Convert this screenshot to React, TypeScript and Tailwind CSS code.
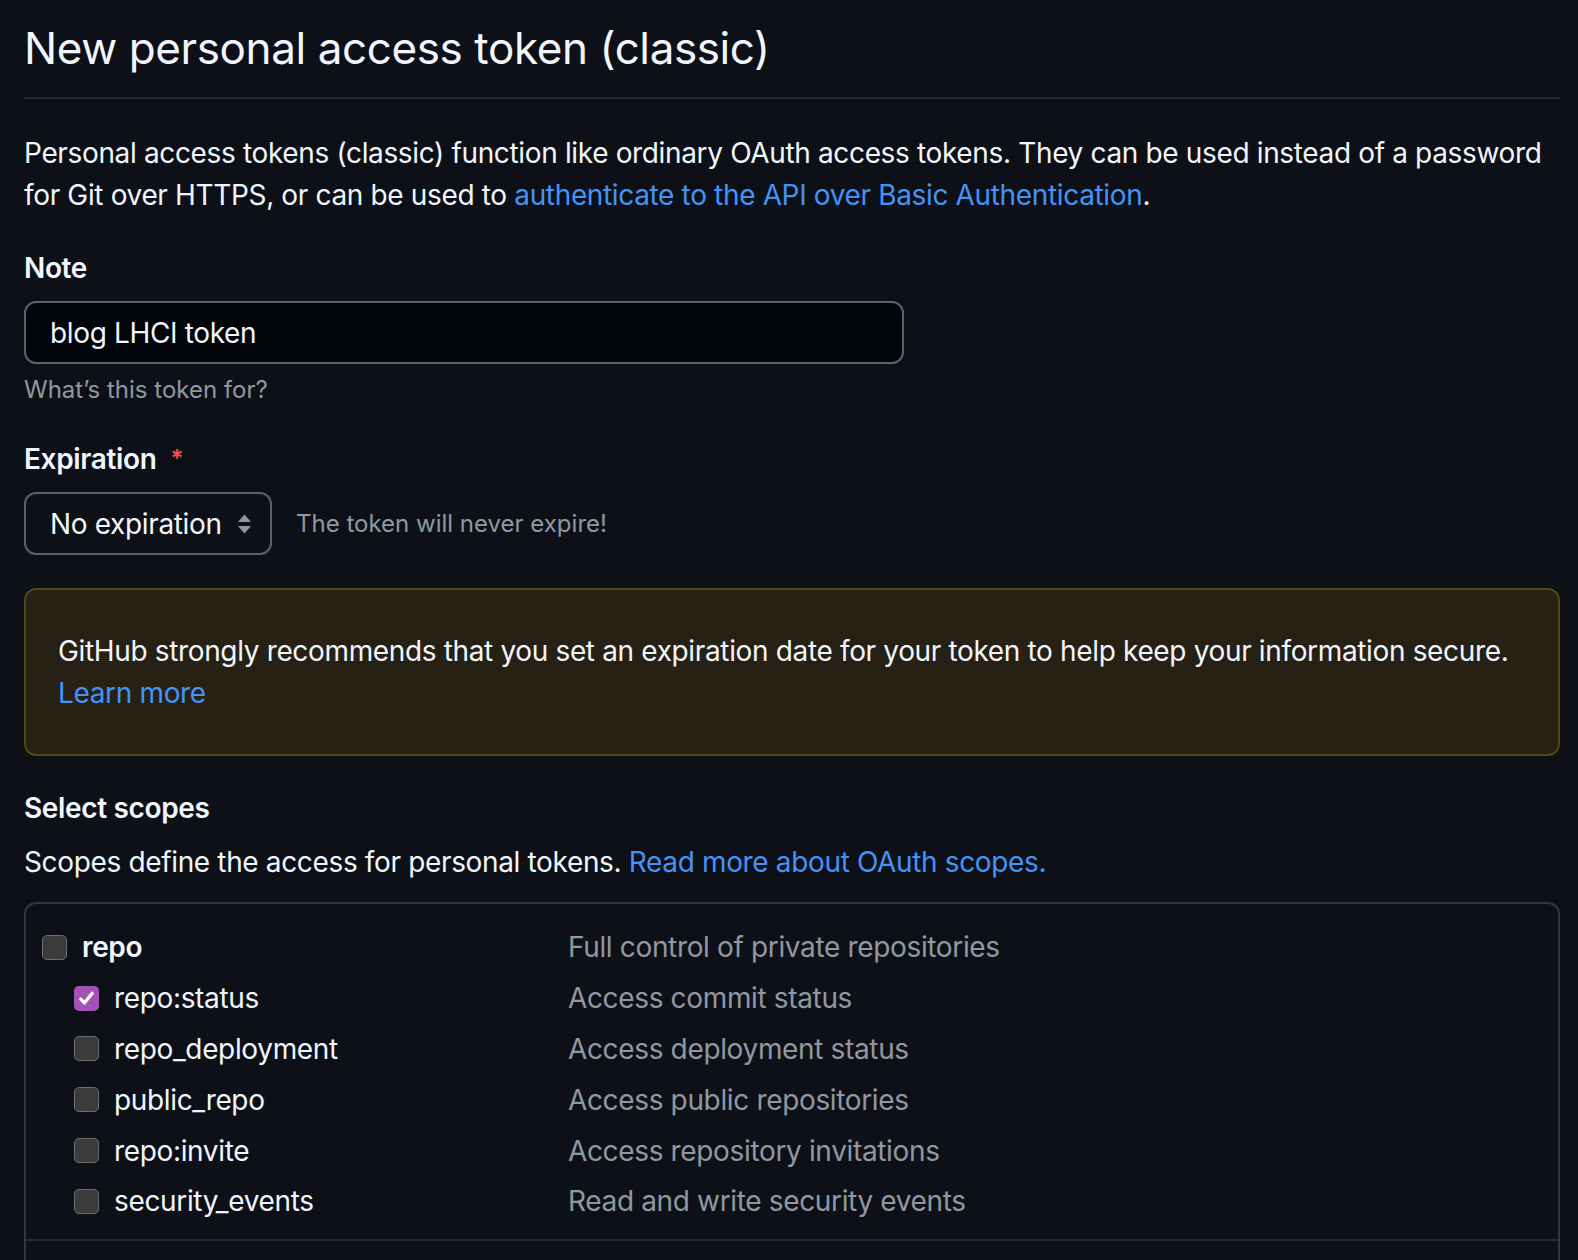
import React from 'react';

type Scope = {
  name: string;
  description: string;
  checked?: boolean;
  parent?: boolean;
};

const scopes: Scope[] = [
  { name: 'repo', description: 'Full control of private repositories', parent: true },
  { name: 'repo:status', description: 'Access commit status', checked: true },
  { name: 'repo_deployment', description: 'Access deployment status' },
  { name: 'public_repo', description: 'Access public repositories' },
  { name: 'repo:invite', description: 'Access repository invitations' },
  { name: 'security_events', description: 'Read and write security events' },
];

const Checkbox: React.FC<{ checked?: boolean }> = ({ checked }) =>
  checked ? (
    <span className="flex h-[25px] w-[25px] shrink-0 items-center justify-center rounded-[5px] bg-[#a451b8]">
      <svg width="19" height="19" viewBox="0 0 16 16" fill="none">
        <path d="M3.2 8.4l3 3.4L12.8 3.6" stroke="#ffffff" strokeWidth="2.8" strokeLinecap="round" strokeLinejoin="round" />
      </svg>
    </span>
  ) : (
    <span className="block h-[25px] w-[25px] shrink-0 rounded-[5px] border-[1.5px] border-[#6e6e6e] bg-[#3b3b3b]" />
  );

const SelectArrows = () => (
  <svg width="15" height="22" viewBox="0 0 15 22" className="shrink-0">
    <path d="M7.5 1.5l6.5 7.5H1z" fill="#9198a1" />
    <path d="M7.5 20.5L1 13h13z" fill="#9198a1" />
  </svg>
);

export default function App() {
  return (
    <div
      className="min-h-screen bg-[#0d1117] pl-6 pr-[18px] text-[#f0f6fc] antialiased"
      style={{ fontFamily: 'Inter, "Noto Sans", sans-serif' }}
    >
      {/* Heading */}
      <div className="border-b-2 border-[#262b33] pt-[20px] pb-[21px]">
        <h1 className="text-[44px] font-normal leading-[56px] tracking-[-0.4px]">
          New personal access token (classic)
        </h1>
      </div>

      <p className="mt-[33px] text-[28px] leading-[42px] tracking-[-0.35px]">
        Personal access tokens (classic) function like ordinary OAuth access tokens. They can be used instead of a password
        for Git over HTTPS, or can be used to{' '}
        <a className="text-[#4493f8]">authenticate to the API over Basic Authentication</a>.
      </p>

      {/* Note */}
      <div className="mt-[31px]">
        <label className="block text-[28px] font-semibold leading-[42px] tracking-[-0.35px]">Note</label>
        <div className="mt-[12px] flex h-[63px] w-[880px] items-center rounded-[12px] border-2 border-[#5b626c] bg-[#010409] px-[24px] text-[28px] tracking-[-0.35px]">
          blog LHCI token
        </div>
        <p className="mt-[8px] text-[24px] leading-[36px] text-[#9198a1]">What’s this token for?</p>
      </div>

      {/* Expiration */}
      <div className="mt-[30px]">
        <label className="flex items-center gap-[14px] text-[28px] font-semibold leading-[42px] tracking-[-0.35px]">
          Expiration <span className="text-[24px] text-[#f85149]">*</span>
        </label>
        <div className="mt-[12px] flex items-center gap-[24px]">
          <div className="flex h-[63px] w-[248px] items-center justify-between rounded-[12px] border-2 border-[#5b626c] pl-[24px] pr-[18px] text-[28px] tracking-[-0.35px]">
            <span>No expiration</span>
            <SelectArrows />
          </div>
          <span className="text-[24px] text-[#9198a1]">The token will never expire!</span>
        </div>
      </div>

      {/* Warning flash */}
      <div className="mt-[33px] rounded-[12px] border-2 border-[#5a4312] bg-[#272115] px-[32px] py-[40px] text-[28px] leading-[42px] tracking-[-0.35px]">
        GitHub strongly recommends that you set an expiration date for your token to help keep your information secure.
        <br />
        <a className="text-[#4493f8]">Learn more</a>
      </div>

      {/* Scopes */}
      <h2 className="mt-[31px] text-[28px] font-semibold leading-[42px] tracking-[-0.35px]">Select scopes</h2>
      <p className="mt-[12px] text-[28px] leading-[42px] tracking-[-0.35px]">
        Scopes define the access for personal tokens.{' '}
        <a className="text-[#4493f8]">Read more about OAuth scopes.</a>
      </p>

      <div className="mt-[19px] rounded-t-[12px] border-2 border-b-0 border-[#30363d] pb-[20px]">
        <div className="border-b-2 border-[#262b33] pt-[18px] pb-[12px]">
          {scopes.map((s) => (
            <div key={s.name} className="flex h-[50.8px] items-center text-[28px] tracking-[-0.35px]">
              <div className={`flex w-[542px] items-center gap-[15px] ${s.parent ? 'pl-[16px]' : 'pl-[48px]'}`}>
                <Checkbox checked={s.checked} />
                <span className={s.parent ? 'font-semibold' : ''}>{s.name}</span>
              </div>
              <span className="text-[#9198a1]">{s.description}</span>
            </div>
          ))}
        </div>
        <div className="h-[40px]" />
      </div>
    </div>
  );
}
